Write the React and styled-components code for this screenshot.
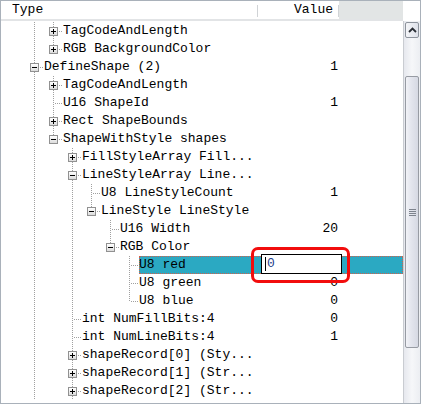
import React from "react";
import styled, { createGlobalStyle, css } from "styled-components";

const Global = createGlobalStyle`
  html, body { margin: 0; padding: 0; background: #fff; }
  body { font-family: "Liberation Mono", "Courier New", monospace; }
`;

const DOT = "#a0a0a0";

const Frame = styled.div`
  position: relative;
  width: 421px;
  height: 404px;
  box-sizing: border-box;
  border: 1px solid #a9b1ba;
  display: grid;
  grid-template-columns: 402px 17px;
  grid-template-rows: 20px 1fr;
  overflow: hidden;
  background: #fff;
  font-family: "Liberation Mono", "Courier New", monospace;
  font-size: 13px;
  color: #000;
`;

const Header = styled.div`
  display: grid;
  grid-template-columns: 257px 81px 1fr;
  border-bottom: 2px solid #e2e4e6;
  box-sizing: border-box;
`;

const HeaderCell = styled.div`
  position: relative;
  line-height: 18px;
  padding: ${(p) => (p.$right ? "0 6px 0 0" : "0 0 0 11px")};
  text-align: ${(p) => (p.$right ? "right" : "left")};
  &::after {
    content: "";
    position: absolute;
    right: 0;
    top: 4px;
    bottom: 2px;
    width: 1px;
    background: #d0d3d6;
  }
`;

const HeaderFiller = styled.div`
  background: #e2e5e5;
`;

const Corner = styled.div`
  background: #fff;
`;

const Body = styled.div`
  padding-top: 1px;
  overflow: hidden;
`;

const Row = styled.div`
  display: flex;
  height: 18px;
  padding-left: 24px;
`;

const vLine = css`
  content: "";
  position: absolute;
  left: 9px;
  width: 1px;
  background-image: repeating-linear-gradient(
    to bottom,
    ${DOT} 0 1px,
    transparent 1px 2px
  );
`;

const Guide = styled.div`
  position: relative;
  flex: 0 0 19px;
  height: 18px;
  ${(p) =>
    p.$kind !== "none" &&
    css`
      &::before {
        ${vLine};
        top: 0;
        bottom: ${p.$kind === "elbow" ? "9px" : "0"};
      }
    `}
  ${(p) =>
    (p.$kind === "tee" || p.$kind === "elbow") &&
    css`
      &::after {
        content: "";
        position: absolute;
        left: 10px;
        right: 0;
        top: 9px;
        height: 1px;
        background-image: repeating-linear-gradient(
          to right,
          transparent 0 1px,
          ${DOT} 1px 2px
        );
      }
    `}
`;

const Expander = styled.span`
  position: absolute;
  z-index: 1;
  left: 5px;
  top: 5px;
  width: 9px;
  height: 9px;
  box-sizing: border-box;
  border: 1px solid #919191;
  background: linear-gradient(#ffffff, #dcdcdc);
  &::before {
    content: "";
    position: absolute;
    left: 1px;
    top: 3px;
    width: 5px;
    height: 1px;
    background: #000;
  }
  ${(p) =>
    p.$open
      ? ""
      : css`
          &::after {
            content: "";
            position: absolute;
            left: 3px;
            top: 1px;
            width: 1px;
            height: 5px;
            background: #000;
          }
        `}
`;

const Main = styled.div`
  flex: 1;
  display: grid;
  grid-template-columns: ${(p) => p.$nameWidth}px 81px 1fr;
  line-height: 18px;
  white-space: nowrap;
  ${(p) =>
    p.$selected &&
    css`
      background: #2ba9c2;
      outline: 1px dotted #d0604c;
      outline-offset: -1px;
    `}
`;

const Label = styled.span`
  overflow: hidden;
`;

const Value = styled.span`
  text-align: right;
  padding-right: 1px;
`;

const Scrollbar = styled.div`
  position: relative;
  border-left: 1px solid #c9ccd1;
  background: linear-gradient(to right, #e6e8ee, #f6f7f9 50%, #eceef2);
  box-sizing: border-box;
  padding: 1px 1px 0 1px;
  display: flex;
  flex-direction: column;
`;

const ScrollButton = styled.div`
  height: 16px;
  box-sizing: border-box;
  border: 1px solid #8d939c;
  border-radius: 2px;
  background: linear-gradient(to right, #f4f5f8, #dfe2ea);
  display: flex;
  align-items: center;
  justify-content: center;
`;

const Thumb = styled.div`
  margin-top: 38px;
  height: 272px;
  box-sizing: border-box;
  border: 1px solid #979ba3;
  border-radius: 2px;
  background: linear-gradient(to right, #f2f3f7, #e4e6ee 40%, #d6d9e3);
  display: flex;
  align-items: center;
  justify-content: center;
`;

const Grip = styled.div`
  width: 7px;
  height: 7px;
  background-image: repeating-linear-gradient(
    to bottom,
    #7d838d 0 1px,
    transparent 1px 2px
  );
`;

const EditBox = styled.div`
  position: absolute;
  left: 260px;
  top: 253px;
  width: 81px;
  height: 20px;
  box-sizing: border-box;
  border: 1px solid #000;
  background: #fff;
  line-height: 18px;
  padding-left: 3px;
  display: flex;
  align-items: center;
  color: #1d3f8c;
`;

const Caret = styled.span`
  width: 1px;
  height: 14px;
  background: #000;
  margin-right: 1px;
`;

const Annotation = styled.div`
  position: absolute;
  left: 250px;
  top: 246px;
  width: 99px;
  height: 36px;
  box-sizing: border-box;
  border: 3px solid #f20d0d;
  border-radius: 7px;
  pointer-events: none;
`;

const P = "pass";
const N = "none";
const T = "tee";
const E = "elbow";

const rows = [
  { g: [P, T], t: "TagCodeAndLength", x: "+" },
  { g: [P, E], t: "RGB BackgroundColor", x: "+" },
  { g: [T], t: "DefineShape (2)", x: "-", v: "1" },
  { g: [P, T], t: "TagCodeAndLength", x: "+" },
  { g: [P, T], t: "U16 ShapeId", v: "1" },
  { g: [P, T], t: "Rect ShapeBounds", x: "+" },
  { g: [P, E], t: "ShapeWithStyle shapes", x: "-" },
  { g: [P, N, T], t: "FillStyleArray Fill...", x: "+" },
  { g: [P, N, T], t: "LineStyleArray Line...", x: "-" },
  { g: [P, N, P, T], t: "U8 LineStyleCount", v: "1" },
  { g: [P, N, P, E], t: "LineStyle LineStyle", x: "-" },
  { g: [P, N, P, N, T], t: "U16 Width", v: "20" },
  { g: [P, N, P, N, E], t: "RGB Color", x: "-" },
  { g: [P, N, P, N, N, T], t: "U8 red", sel: true },
  { g: [P, N, P, N, N, T], t: "U8 green", v: "0" },
  { g: [P, N, P, N, N, E], t: "U8 blue", v: "0" },
  { g: [P, N, T], t: "int NumFillBits:4", v: "0" },
  { g: [P, N, T], t: "int NumLineBits:4", v: "1" },
  { g: [P, N, T], t: "shapeRecord[0] (Sty...", x: "+" },
  { g: [P, N, T], t: "shapeRecord[1] (Str...", x: "+" },
  { g: [P, N, T], t: "shapeRecord[2] (Str...", x: "+" },
];

function TreeRow({ row }) {
  const last = row.g.length - 1;
  const textX = 25 + 19 * row.g.length;
  return (
    <Row>
      {row.g.map((k, i) => (
        <Guide key={i} $kind={k}>
          {i === last && row.x && <Expander $open={row.x === "-"} />}
        </Guide>
      ))}
      <Main $nameWidth={258 - textX} $selected={row.sel}>
        <Label>{row.t}</Label>
        <Value>{row.v || ""}</Value>
        <span />
      </Main>
    </Row>
  );
}

export default function App() {
  return (
    <>
      <Global />
      <Frame>
        <Header>
          <HeaderCell>Type</HeaderCell>
          <HeaderCell $right>Value</HeaderCell>
          <HeaderFiller />
        </Header>
        <Corner />
        <Body>
          {rows.map((r, i) => (
            <TreeRow key={i} row={r} />
          ))}
        </Body>
        <Scrollbar>
          <ScrollButton>
            <svg width="9" height="6" viewBox="0 0 9 6">
              <path d="M1 5 L4.5 1.5 L8 5" fill="none" stroke="#2b2f36" strokeWidth="1.8" />
            </svg>
          </ScrollButton>
          <Thumb>
            <Grip />
          </Thumb>
        </Scrollbar>
        <EditBox>
          <Caret />0
        </EditBox>
        <Annotation />
      </Frame>
    </>
  );
}
